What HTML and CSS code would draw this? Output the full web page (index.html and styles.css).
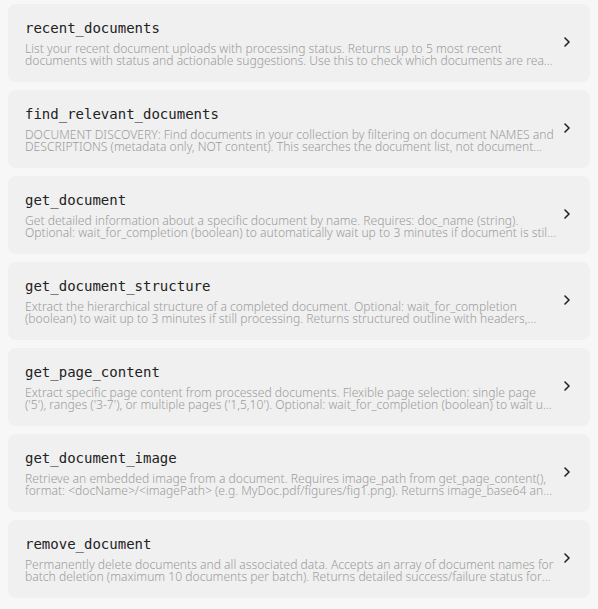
FILE: index.html
```html
<!DOCTYPE html>
<html>
<head>
<meta charset="utf-8">
<link rel="stylesheet" href="styles.css">
</head>
<body>
<div class="list">
  <div class="card">
    <div class="body">
      <div class="title">recent_documents</div>
      <div class="desc">List your recent document uploads with processing status. Returns up to 5 most recent documents with status and actionable suggestions. Use this to check which documents are ready for querying and which are still processing.</div>
    </div>
    <svg class="chev" viewBox="0 0 6 10" width="6" height="10"><path d="M1 1l4 4-4 4" fill="none" stroke="#222" stroke-width="1.6" stroke-linecap="round" stroke-linejoin="round"/></svg>
  </div>
  <div class="card">
    <div class="body">
      <div class="title">find_relevant_documents</div>
      <div class="desc">DOCUMENT DISCOVERY: Find documents in your collection by filtering on document NAMES and DESCRIPTIONS (metadata only, NOT content). This searches the document list, not document contents.</div>
    </div>
    <svg class="chev" viewBox="0 0 6 10" width="6" height="10"><path d="M1 1l4 4-4 4" fill="none" stroke="#222" stroke-width="1.6" stroke-linecap="round" stroke-linejoin="round"/></svg>
  </div>
  <div class="card">
    <div class="body">
      <div class="title">get_document</div>
      <div class="desc">Get detailed information about a specific document by name. Requires: doc_name (string). Optional: wait_for_completion (boolean) to automatically wait up to 3 minutes if document is still processing.</div>
    </div>
    <svg class="chev" viewBox="0 0 6 10" width="6" height="10"><path d="M1 1l4 4-4 4" fill="none" stroke="#222" stroke-width="1.6" stroke-linecap="round" stroke-linejoin="round"/></svg>
  </div>
  <div class="card">
    <div class="body">
      <div class="title">get_document_structure</div>
      <div class="desc">Extract the hierarchical structure of a completed document. Optional: wait_for_completion (boolean) to wait up to 3 minutes if still processing. Returns structured outline with headers, sections and page numbers.</div>
    </div>
    <svg class="chev" viewBox="0 0 6 10" width="6" height="10"><path d="M1 1l4 4-4 4" fill="none" stroke="#222" stroke-width="1.6" stroke-linecap="round" stroke-linejoin="round"/></svg>
  </div>
  <div class="card">
    <div class="body">
      <div class="title">get_page_content</div>
      <div class="desc">Extract specific page content from processed documents. Flexible page selection: single page ('5'), ranges ('3-7'), or multiple pages ('1,5,10'). Optional: wait_for_completion (boolean) to wait up to 3 minutes.</div>
    </div>
    <svg class="chev" viewBox="0 0 6 10" width="6" height="10"><path d="M1 1l4 4-4 4" fill="none" stroke="#222" stroke-width="1.6" stroke-linecap="round" stroke-linejoin="round"/></svg>
  </div>
  <div class="card">
    <div class="body">
      <div class="title">get_document_image</div>
      <div class="desc">Retrieve an embedded image from a document. Requires image_path from get_page_content(), format: &lt;docName&gt;/&lt;imagePath&gt; (e.g. MyDoc.pdf/figures/fig1.png). Returns image_base64 and metadata.</div>
    </div>
    <svg class="chev" viewBox="0 0 6 10" width="6" height="10"><path d="M1 1l4 4-4 4" fill="none" stroke="#222" stroke-width="1.6" stroke-linecap="round" stroke-linejoin="round"/></svg>
  </div>
  <div class="card">
    <div class="body">
      <div class="title">remove_document</div>
      <div class="desc">Permanently delete documents and all associated data. Accepts an array of document names for batch deletion (maximum 10 documents per batch). Returns detailed success/failure status for each document.</div>
    </div>
    <svg class="chev" viewBox="0 0 6 10" width="6" height="10"><path d="M1 1l4 4-4 4" fill="none" stroke="#222" stroke-width="1.6" stroke-linecap="round" stroke-linejoin="round"/></svg>
  </div>
</div>
</body>
</html>
```
FILE: styles.css
```css
html, body {
  margin: 0;
  padding: 0;
  background: #f7f7f7;
}
body {
  padding: 4px 8px;
  font-family: "Noto Sans", sans-serif;
}
.list {
  display: flex;
  flex-direction: column;
  gap: 8px;
}
.card {
  display: flex;
  align-items: center;
  gap: 6px;
  height: 78px;
  box-sizing: border-box;
  padding: 0 20px 0 17px;
  background: #f0f0f0;
  border-radius: 8px;
}
.body {
  flex: 1;
  min-width: 0;
}
.title {
  font-family: "DejaVu Sans Mono", monospace;
  font-size: 14px;
  line-height: 18px;
  color: #222;
  margin-bottom: 6px;
}
.desc {
  font-size: 12.1px;
  font-weight: 300;
  line-height: 12.5px;
  color: #9c9c9c;
  display: -webkit-box;
  -webkit-line-clamp: 2;
  -webkit-box-orient: vertical;
  overflow: hidden;
}
.chev {
  flex: none;
  margin-top: -2px;
}
```
